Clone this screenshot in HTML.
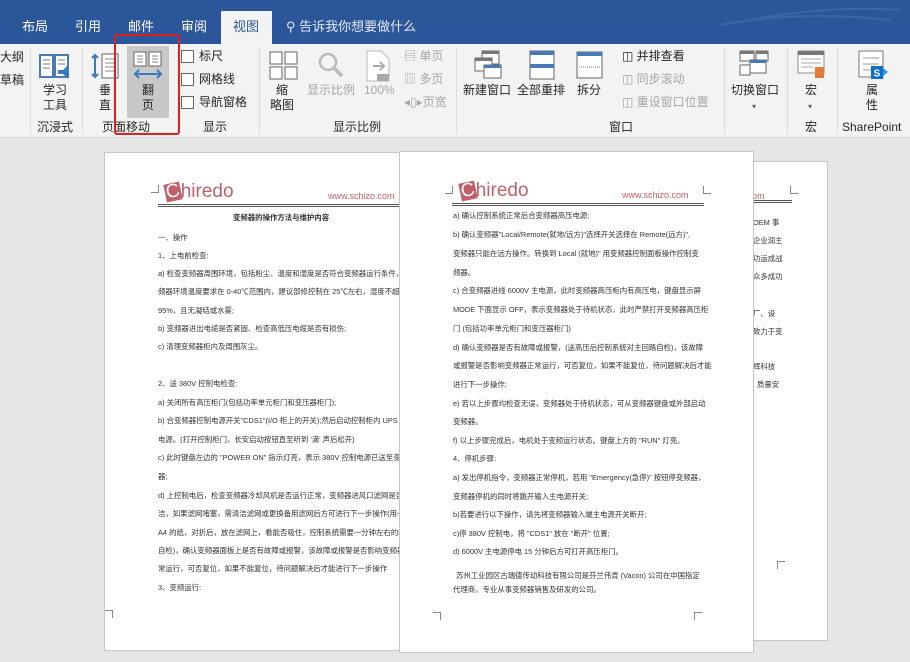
<!DOCTYPE html>
<html><head><meta charset="utf-8"><style>
*{margin:0;padding:0;box-sizing:border-box}
body{width:910px;height:662px;overflow:hidden;position:relative;background:#e6e6e6;font-family:"Liberation Sans","Noto Sans CJK SC",sans-serif;color:#222}
.a{position:absolute;white-space:nowrap}
#top{position:absolute;left:0;top:0;width:910px;height:44px;background:#2b579a}
.tab{position:absolute;top:16px;color:#fff;font-size:13px}
#rib{position:absolute;left:0;top:44px;width:910px;height:94px;background:#f3f3f3;border-bottom:1px solid #d5d5d5}
.r{position:absolute;font-size:12px;color:#262626;white-space:nowrap;line-height:15px}
.g{color:#a6a6a6}
.sep{position:absolute;top:48px;width:1px;height:86px;background:#dcdcdc}
.cb{position:absolute;width:13px;height:13px;border:1px solid #666;background:#fff}
.page{position:absolute;background:#fff;border:1px solid #c6c6c6;overflow:hidden}
.l{position:absolute;font-size:7.4px;color:#333;white-space:nowrap;line-height:9px}
.logo{position:absolute;font-size:19px;color:#c0606a;font-family:"Liberation Sans",sans-serif}
.logo b{display:inline-block;background:#c0606a;color:#fff;font-weight:normal;transform:rotate(-12deg);padding:0 1px;line-height:18px}
.www{position:absolute;font-size:9px;color:#c0606a}
.hl{position:absolute;height:3px;border-top:1px solid #555;border-bottom:1px solid #555}
.c{position:absolute;width:8px;height:8px;border-color:#888;border-style:solid;border-width:0}
</style></head><body>
<div id="top"></div>
<div class="tab" style="left:22px">布局</div>
<div class="tab" style="left:75px">引用</div>
<div class="tab" style="left:128px">邮件</div>
<div class="tab" style="left:181px">审阅</div>
<div class="a" style="left:221px;top:11px;width:51px;height:34px;background:#f3f3f3"></div>
<div class="tab" style="left:233px;color:#2b579a">视图</div>
<div class="tab" style="left:286px;color:#dfe6f1">⚲ 告诉我你想要做什么</div>
<svg class="a" style="left:600px;top:0" width="310" height="44"><path d="M290 20 Q200 10 120 25 M300 10 Q220 5 140 22" stroke="#3a66a8" stroke-width="2" fill="none"/></svg>
<div id="rib"></div>
<div class="r" style="left:0;top:50px">大纲</div>
<div class="r" style="left:0;top:73px">草稿</div>
<div class="sep" style="left:30px"></div>
<svg class="a" style="left:38px;top:52px" width="34" height="30"><rect x="2" y="3" width="13" height="22" fill="#fff" stroke="#4a7ab5" stroke-width="2"/><rect x="17" y="3" width="13" height="22" fill="#fff" stroke="#4a7ab5" stroke-width="2"/><path d="M5 8h7M5 12h7M5 16h7M20 8h7M20 12h7" stroke="#777"/><path d="M20 18h5l5-5v14l-5-5h-5z" fill="#3c78c0"/></svg>
<div class="r" style="left:43px;top:83px">学习</div><div class="r" style="left:43px;top:98px">工具</div>
<div class="r" style="left:37px;top:120px">沉浸式</div>
<div class="sep" style="left:82px"></div>
<svg class="a" style="left:89px;top:52px" width="34" height="30"><path d="M6 3v22M3 6l3-3 3 3M3 22l3 3 3-3" stroke="#3c78c0" stroke-width="2" fill="none"/><rect x="13" y="2" width="16" height="24" fill="#fff" stroke="#666"/><path d="M16 7h10M16 11h10M16 15h10M16 19h10" stroke="#888"/></svg>
<div class="r" style="left:99px;top:83px">垂</div><div class="r" style="left:99px;top:98px">直</div>
<div class="a" style="left:127px;top:46px;width:42px;height:72px;background:#c8c8c8"></div>
<svg class="a" style="left:132px;top:50px" width="32" height="30"><rect x="2" y="2" width="12" height="14" fill="#fff" stroke="#666"/><rect x="17" y="2" width="12" height="14" fill="#fff" stroke="#666"/><path d="M5 6h6M5 9h6M5 12h6M20 6h6M20 9h6M20 12h6" stroke="#888"/><path d="M3 24h26M7 20l-4 4 4 4M25 20l4 4-4 4" stroke="#3c78c0" stroke-width="2" fill="none"/></svg>
<div class="r" style="left:142px;top:83px">翻</div><div class="r" style="left:142px;top:98px">页</div>
<div class="r" style="left:102px;top:120px">页面移动</div>
<div class="a" style="left:114px;top:34px;width:66px;height:101px;border:2.5px solid #e02020;border-radius:3px"></div>
<div class="cb" style="left:181px;top:50px"></div><div class="r" style="left:199px;top:49px">标尺</div>
<div class="cb" style="left:181px;top:73px"></div><div class="r" style="left:199px;top:72px">网格线</div>
<div class="cb" style="left:181px;top:96px"></div><div class="r" style="left:199px;top:95px">导航窗格</div>
<div class="r" style="left:203px;top:120px">显示</div>
<div class="sep" style="left:259px"></div>
<svg class="a" style="left:269px;top:51px" width="30" height="30"><rect x="1" y="1" width="12" height="12" fill="#fff" stroke="#666"/><rect x="16" y="1" width="12" height="12" fill="#fff" stroke="#666"/><rect x="1" y="16" width="12" height="12" fill="#fff" stroke="#666"/><rect x="16" y="16" width="12" height="12" fill="#fff" stroke="#666"/></svg>
<div class="r" style="left:276px;top:83px">缩</div><div class="r" style="left:270px;top:98px">略图</div>
<svg class="a" style="left:316px;top:50px" width="30" height="30"><circle cx="12" cy="12" r="8" fill="none" stroke="#bbb" stroke-width="2.5"/><path d="M18 18l8 8" stroke="#bbb" stroke-width="3.5"/></svg>
<div class="r g" style="left:307px;top:83px">显示比例</div>
<svg class="a" style="left:365px;top:49px" width="30" height="34"><path d="M2 2h14l8 8v22H2z" fill="#fff" stroke="#bbb"/><path d="M8 17h10M15 13l4 4-4 4" stroke="#aaa" stroke-width="2" fill="none"/><rect x="12" y="25" width="12" height="7" fill="#aaa"/></svg>
<div class="r g" style="left:364px;top:83px">100%</div>
<div class="r g" style="left:404px;top:49px">▤ 单页</div>
<div class="r g" style="left:404px;top:72px">▥ 多页</div>
<div class="r g" style="left:404px;top:95px">◂▯▸页宽</div>
<div class="r" style="left:333px;top:120px">显示比例</div>
<div class="sep" style="left:456px"></div>
<svg class="a" style="left:472px;top:49px" width="32" height="32"><rect x="10" y="2" width="17" height="13" fill="#fff" stroke="#666"/><rect x="10" y="2" width="17" height="3" fill="#777"/><rect x="3" y="9" width="17" height="13" fill="#fff" stroke="#666"/><rect x="3" y="9" width="17" height="3" fill="#777"/><rect x="12" y="16" width="17" height="13" fill="#fff" stroke="#666"/><rect x="12" y="16" width="17" height="3" fill="#4a7ab5"/></svg>
<div class="r" style="left:463px;top:83px">新建窗口</div>
<svg class="a" style="left:528px;top:49px" width="30" height="32"><rect x="2" y="2" width="24" height="28" fill="#fff" stroke="#666"/><rect x="2" y="2" width="24" height="4" fill="#4a7ab5"/><rect x="2" y="15" width="24" height="4" fill="#4a7ab5"/></svg>
<div class="r" style="left:517px;top:83px">全部重排</div>
<svg class="a" style="left:575px;top:50px" width="30" height="30"><rect x="2" y="2" width="25" height="26" fill="#fff" stroke="#666"/><rect x="2" y="2" width="25" height="4" fill="#4a7ab5"/><path d="M4 17h21" stroke="#777" stroke-dasharray="1 1"/></svg>
<div class="r" style="left:577px;top:83px">拆分</div>
<div class="r" style="left:622px;top:49px">◫ 并排查看</div>
<div class="r g" style="left:622px;top:72px">◫ 同步滚动</div>
<div class="r g" style="left:622px;top:95px">◫ 重设窗口位置</div>
<div class="r" style="left:609px;top:120px">窗口</div>
<div class="sep" style="left:724px"></div>
<svg class="a" style="left:738px;top:49px" width="32" height="30"><rect x="2" y="2" width="14" height="10" fill="#fff" stroke="#666"/><rect x="2" y="2" width="14" height="3" fill="#777"/><rect x="18" y="2" width="12" height="10" fill="#fff" stroke="#666"/><rect x="18" y="2" width="12" height="3" fill="#777"/><rect x="2" y="16" width="10" height="10" fill="#fff" stroke="#666"/><rect x="12" y="11" width="16" height="13" fill="#fff" stroke="#666"/><rect x="12" y="11" width="16" height="3" fill="#4a7ab5"/></svg>
<div class="r" style="left:731px;top:83px">切换窗口</div>
<div class="r" style="left:752px;top:99px;font-size:8px;color:#666">▾</div>
<div class="sep" style="left:787px"></div>
<svg class="a" style="left:796px;top:49px" width="32" height="32"><rect x="2" y="2" width="26" height="22" fill="#fff" stroke="#888"/><rect x="2" y="2" width="26" height="4" fill="#777"/><path d="M5 10h20M5 14h20M5 18h12" stroke="#aaa"/><path d="M19 18h9v11h-9z" fill="#e07b39"/></svg>
<div class="r" style="left:805px;top:83px">宏</div>
<div class="r" style="left:808px;top:99px;font-size:8px;color:#666">▾</div>
<div class="r" style="left:805px;top:120px">宏</div>
<div class="sep" style="left:837px"></div>
<svg class="a" style="left:857px;top:50px" width="32" height="32"><rect x="2" y="1" width="24" height="26" fill="#fff" stroke="#777"/><path d="M6 8h16M6 14h16M6 20h10" stroke="#999"/><rect x="14" y="16" width="12" height="13" fill="#0f6fc6"/><text x="16.5" y="26.5" font-size="10" fill="#fff" font-family="Liberation Sans" font-weight="bold">S</text><path d="M26 18l5 4-5 4" fill="#2f9ad8"/></svg>
<div class="r" style="left:866px;top:83px">属</div><div class="r" style="left:866px;top:98px">性</div>
<div class="r" style="left:842px;top:120px">SharePoint</div>

<!-- page 3 -->
<div class="page" style="left:752px;top:161px;width:76px;height:480px">
<div class="www" style="left:-8px;top:29px">.com</div>
<div class="c" style="left:37px;top:24px;border-left-width:1px;border-bottom-width:1px"></div>
<div class="hl" style="left:-5px;top:38px;width:44px"></div>
<div class="l" style="left:0;top:56px">OEM 事</div>
<div class="l" style="left:0;top:74px">企业润主</div>
<div class="l" style="left:0;top:92px">功运成战</div>
<div class="l" style="left:0;top:110px">众多成功</div>
<div class="l" style="left:0;top:147px">厂、设</div>
<div class="l" style="left:0;top:165px">致力于变</div>
<div class="l" style="left:0;top:200px">辉科技</div>
<div class="l" style="left:4px;top:218px">质量安</div>
<div class="c" style="left:24px;top:399px;border-left-width:1px;border-top-width:1px"></div>
</div>

<!-- page 1 -->
<div class="page" style="left:104px;top:152px;width:300px;height:499px">
<div class="c" style="left:46px;top:32px;border-right-width:1px;border-bottom-width:1px"></div>
<div class="logo" style="left:60px;top:28px"><b>C</b>hiredo</div>
<div class="www" style="left:223px;top:38px">www.schizo.com</div>
<div class="hl" style="left:53px;top:51px;width:260px"></div>
<div class="l" style="left:128px;top:60px;font-weight:bold">变频器的操作方法与维护内容</div>
<div class="l" style="left:53px;top:80px">一、操作</div>
<div class="l" style="left:53px;top:98px">1、上电前检查:</div>
<div class="l" style="left:53px;top:116px">a) 检查变频器周围环境，包括粉尘、温度和湿度是否符合变频器运行条件，变</div>
<div class="l" style="left:53px;top:134px">频器环境温度要求在 0-40℃范围内，建议部修控制在 25℃左右，湿度不超过</div>
<div class="l" style="left:53px;top:153px">95%，且无凝结或水雾;</div>
<div class="l" style="left:53px;top:171px">b) 变频器进出电缆是否紧固、检查高低压电缆是否有损伤;</div>
<div class="l" style="left:53px;top:189px">c) 清理变频器柜内及周围灰尘。</div>
<div class="l" style="left:53px;top:226px">2、送 380V 控制电检查:</div>
<div class="l" style="left:53px;top:245px">a) 关闭所有高压柜门(包括功率单元柜门和变压器柜门);</div>
<div class="l" style="left:53px;top:263px">b) 合变频器控制电源开关"CDS1"(I/O 柜上的开关);然后启动控制柜内 UPS</div>
<div class="l" style="left:53px;top:282px">电源。(打开控制柜门，长安启动按钮直至听到 '滴' 声后松开)</div>
<div class="l" style="left:53px;top:300px">c) 此时键盘左边的 "POWER ON" 指示灯亮，表示 380V 控制电源已送至变频</div>
<div class="l" style="left:53px;top:319px">器;</div>
<div class="l" style="left:53px;top:338px">d) 上控制电后，检查变频器冷却风机是否运行正常，变频器进风口滤网是否清</div>
<div class="l" style="left:53px;top:356px">洁，如果滤网堵塞，需清洁滤网或更换备用滤网后方可进行下一步操作(用一张</div>
<div class="l" style="left:53px;top:375px">A4 的纸，对折后，放在滤网上，看能否吸住，控制系统需要一分钟左右的时间</div>
<div class="l" style="left:53px;top:393px">自检)，确认变频器面板上是否有故障或报警，该故障或报警是否影响变频器正</div>
<div class="l" style="left:53px;top:411px">常运行，可否复位，如果不能复位，待问题解决后才能进行下一步操作</div>
<div class="l" style="left:53px;top:430px">3、变频运行:</div>
<div class="c" style="left:0;top:457px;border-right-width:1px;border-top-width:1px"></div>
</div>

<!-- page 2 -->
<div class="page" style="left:399px;top:151px;width:355px;height:502px">
<div class="c" style="left:45px;top:34px;border-right-width:1px;border-bottom-width:1px"></div>
<div class="logo" style="left:60px;top:28px"><b>C</b>hiredo</div>
<div class="www" style="left:222px;top:38px">www.schizo.com</div>
<div class="c" style="left:303px;top:34px;border-left-width:1px;border-bottom-width:1px"></div>
<div class="hl" style="left:52px;top:51px;width:252px"></div>
<div class="l" style="left:53px;top:59px">a) 确认控制系统正常后合变频器高压电源;</div>
<div class="l" style="left:53px;top:78px">b) 确认变频器"Local/Remote(就地/远方)"选择开关选择在 Remote(远方)",</div>
<div class="l" style="left:53px;top:97px">变频器只能在远方操作。转换到 Local (就地)" 用变频器控制面板操作控制变</div>
<div class="l" style="left:53px;top:116px">频器。</div>
<div class="l" style="left:53px;top:134px">c) 合变频器进线 6000V 主电源，此时变频器高压柜内有高压电，键盘显示屏</div>
<div class="l" style="left:53px;top:153px">MODE 下面显示 OFF，表示变频器处于待机状态，此时严禁打开变频器高压柜</div>
<div class="l" style="left:53px;top:172px">门 (包括功率单元柜门和变压器柜门)</div>
<div class="l" style="left:53px;top:191px">d) 确认变频器是否有故障或报警，(送高压后控制系统对主回路自检)，该故障</div>
<div class="l" style="left:53px;top:209px">或报警是否影响变频器正常运行，可否复位，如果不能复位，待问题解决后才能</div>
<div class="l" style="left:53px;top:228px">进行下一步操作;</div>
<div class="l" style="left:53px;top:247px">e) 若以上步骤均检查无误，变频器处于待机状态，可从变频器键盘或外部启动</div>
<div class="l" style="left:53px;top:265px">变频器。</div>
<div class="l" style="left:53px;top:284px">f) 以上步骤完成后，电机处于变频运行状态。键盘上方的 "RUN" 灯亮。</div>
<div class="l" style="left:53px;top:302px">4、停机步骤:</div>
<div class="l" style="left:53px;top:321px">a) 发出停机指令，变频器正常停机，若用 "Emergency(急停)" 按钮停变频器，</div>
<div class="l" style="left:53px;top:340px">变频器停机的同时将跳开输入主电源开关;</div>
<div class="l" style="left:53px;top:358px">b)若要进行以下操作，请先将变频器输入端主电源开关断开;</div>
<div class="l" style="left:53px;top:377px">c)停 380V 控制电，将 "CDS1" 放在 "断开" 位置;</div>
<div class="l" style="left:53px;top:395px">d) 6000V 主电源停电 15 分钟后方可打开高压柜门。</div>
<div class="l" style="left:56px;top:419px">苏州工业园区古瑞德传动科技有限公司是芬兰伟肯 (Vacon) 公司在中国指定</div>
<div class="l" style="left:53px;top:433px">代理商，专业从事变频器销售及研发的公司。</div>
<div class="c" style="left:33px;top:460px;border-right-width:1px;border-top-width:1px"></div>
<div class="c" style="left:294px;top:460px;border-left-width:1px;border-top-width:1px"></div>
</div>
</body></html>
